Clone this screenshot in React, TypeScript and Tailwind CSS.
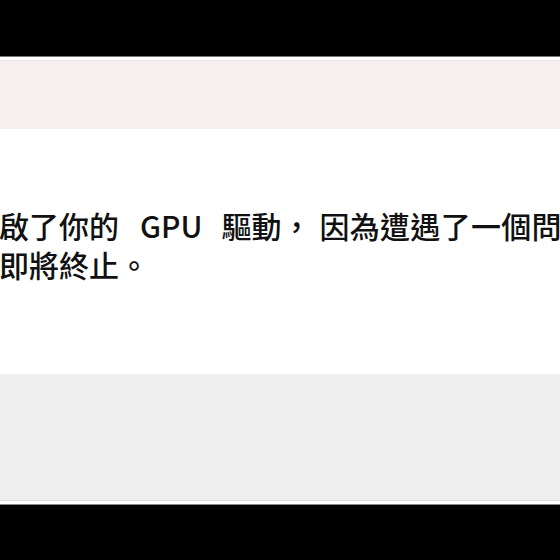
export default function App() {
  return (
    <div className="w-[560px] h-[560px] overflow-hidden bg-black flex flex-col">
      <div className="h-[56px] bg-black" />
      <div className="h-px bg-[#7a7a7a]" />
      <div className="h-[3px] bg-white" />
      <div className="h-px bg-[#e9e6e7]" />
      <div className="h-[68px] bg-[#f6eff0]" />
      <div className="h-[245px] bg-white pt-[77px]">
        <div
          className="text-[30px] leading-[39px] font-medium text-[#111] whitespace-nowrap -ml-px"
          style={{ fontFamily: '"Noto Sans CJK TC", "Noto Sans", sans-serif' }}
        >
          <p>
            啟了你的<span className="ml-[21px] mr-[19px]">GPU</span>驅動，
            <span className="ml-[8px] tracking-[0.3px]">因為遭遇了一個問題</span>
          </p>
          <p>即將終止。</p>
        </div>
      </div>
      <div className="h-[126px] bg-[#efefef]" />
      <div className="h-px bg-[#dadada]" />
      <div className="h-[3px] bg-white" />
      <div className="h-px bg-[#8a8a8a]" />
      <div className="flex-1 bg-black" />
    </div>
  );
}
